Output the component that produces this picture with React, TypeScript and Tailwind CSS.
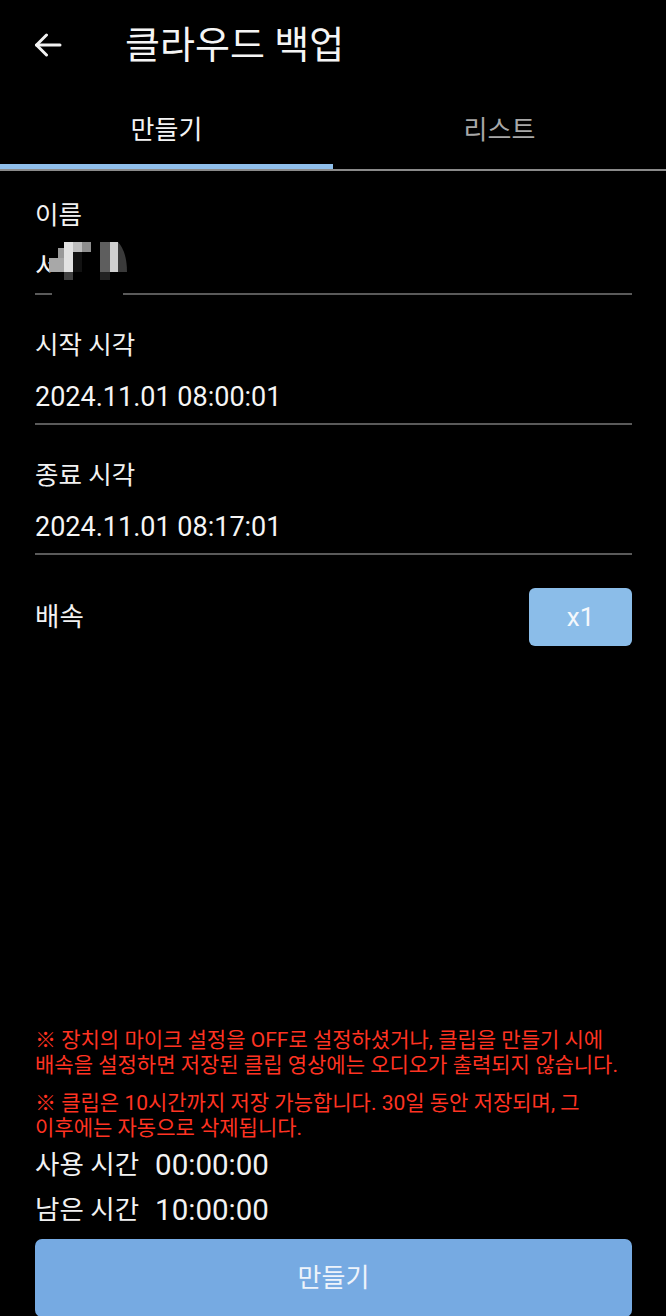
import React from "react";

const FONT = { fontFamily: 'Roboto, "Noto Sans CJK KR", sans-serif' };

function Field({ label, value, first }: { label: string; value?: string; first?: boolean }) {
  return (
    <div className={first ? "mt-[29px]" : "mt-[35px]"}>
      <div className="h-[30px] leading-[30px] text-[25.5px] text-[#f2f2f2]">{label}</div>
      <div className="mt-[21px] h-[32px] leading-[32px] text-[27px] text-[#f5f5f5] whitespace-nowrap">{value ?? "\u00a0"}</div>
      <div className="mt-[10px] h-[2px] bg-[#5a5a5a]" />
    </div>
  );
}

function Mosaic() {
  // svg origin at page (34, 236)
  return (
    <svg width="96" height="62" viewBox="0 0 96 62" className="absolute left-[34px] top-[65px]">
      <rect x="18" y="4" width="78" height="44" fill="#000" />
      <rect x="18" y="56" width="71" height="5" fill="#000" />
      <rect x="24" y="12" width="6" height="24" fill="#9a9a9a" />
      <rect x="15" y="22" width="15" height="14" fill="#a8a8a8" />
      <rect x="30" y="6" width="9" height="30" fill="#e2e2e2" />
      <rect x="39" y="6" width="9" height="10" fill="#bdbdbd" />
      <rect x="39" y="16" width="9" height="20" fill="#121212" />
      <rect x="48" y="6" width="9" height="10" fill="#8e8e8e" />
      <rect x="30" y="36" width="9" height="8" fill="#404040" />
      <rect x="66" y="6" width="10" height="30" fill="#5e5e5e" />
      <rect x="66" y="36" width="10" height="8" fill="#222" />
      <rect x="76" y="6" width="8" height="30" fill="#cfcfcf" />
      <path d="M84 6 Q93 16 93 36 L84 36 Z" fill="#3a3a3a" />
    </svg>
  );
}

export default function App() {
  return (
    <div className="w-[666px] h-[1316px] overflow-hidden bg-black text-white" style={FONT}>
      <div className="flex flex-col h-[1317px]">
        {/* header */}
        <div className="h-[90px] flex items-center pl-[34px] shrink-0">
          <svg width="28" height="24" viewBox="0 0 28 24" fill="none" stroke="#f2f2f2" strokeWidth="3" strokeLinecap="round" strokeLinejoin="round">
            <path d="M26 12H2.5" />
            <path d="M12.5 2L2.5 12L12.5 22" />
          </svg>
          <div className="ml-[63px] text-[38px] leading-none text-[#f5f5f5]">클라우드 백업</div>
        </div>

        {/* tabs */}
        <div className="shrink-0">
          <div className="flex h-[74px] pt-[6px]">
            <div className="flex-1 flex items-center justify-center text-[26px] text-[#f5f5f5]">만들기</div>
            <div className="flex-1 flex items-center justify-center text-[26px] text-[#a8a8a8]">리스트</div>
          </div>
          <div className="w-1/2 h-[5px] bg-[#8fbfeb]" />
          <div className="h-[2px] bg-[#8a8a8a]" />
        </div>

        {/* form */}
        <div className="relative pl-[35px] pr-[34px] shrink-0">
          <Field first label="이름" value="서" />
          <Mosaic />
          <Field label="시작 시각" value="2024.11.01 08:00:01" />
          <Field label="종료 시각" value="2024.11.01 08:17:01" />
          <div className="mt-[33px] h-[58px] flex items-center justify-between">
            <div className="text-[26.5px] text-[#f2f2f2]">배속</div>
            <button className="w-[103px] h-[58px] rounded-[6px] bg-[#8bbde9] text-[26px] text-[#f5f8fc]">x1</button>
          </div>
        </div>

        <div className="flex-1" />

        {/* bottom */}
        <div className="pl-[35px] pr-[34px] shrink-0">
          <div className="text-[21px] leading-[25px] text-[#ff3322] whitespace-nowrap">
            ※ 장치의 마이크 설정을 OFF로 설정하셨거나, 클립을 만들기 시에
            <br />
            배속을 설정하면 저장된 클립 영상에는 오디오가 출력되지 않습니다.
          </div>
          <div className="mt-[13px] text-[21px] leading-[25px] text-[#ff3322] whitespace-nowrap">
            ※ 클립은 10시간까지 저장 가능합니다. 30일 동안 저장되며, 그
            <br />
            이후에는 자동으로 삭제됩니다.
          </div>
          <div className="flex h-[45px] items-center text-[#f2f2f2] pt-[3px]">
            <span className="text-[26.5px]">사용 시간</span>
            <span className="ml-[16px] text-[29.5px]">00:00:00</span>
          </div>
          <div className="flex h-[45px] items-center text-[#f2f2f2] pt-[3px]">
            <span className="text-[26.5px]">남은 시간</span>
            <span className="ml-[16px] text-[29.5px]">10:00:00</span>
          </div>
          <button className="mt-[8px] w-full h-[78px] rounded-[7px] bg-[#76aae2] text-[26px] text-[#eef4fb]">만들기</button>
        </div>
      </div>
    </div>
  );
}
